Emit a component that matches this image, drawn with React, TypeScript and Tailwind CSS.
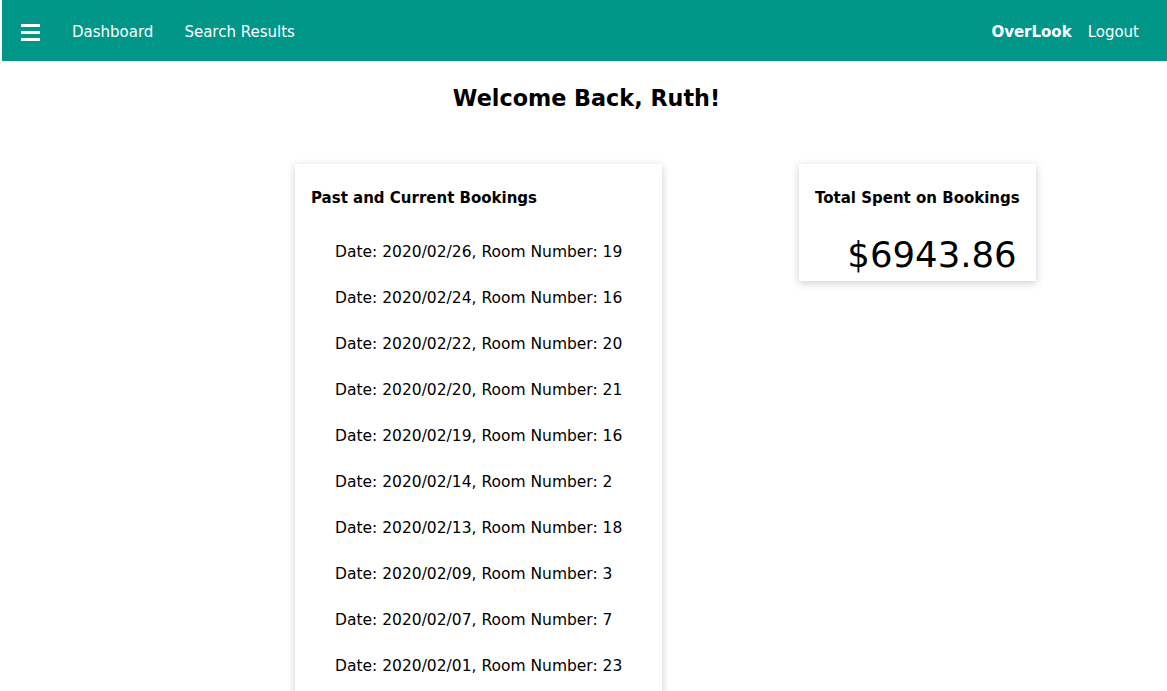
import React from "react";

const bookings = [
  ["2020/02/26", 19],
  ["2020/02/24", 16],
  ["2020/02/22", 20],
  ["2020/02/20", 21],
  ["2020/02/19", 16],
  ["2020/02/14", 2],
  ["2020/02/13", 18],
  ["2020/02/09", 3],
  ["2020/02/07", 7],
  ["2020/02/01", 23],
];

export default function App() {
  return (
    <div className="min-h-screen bg-white text-black" style={{ fontFamily: '"DejaVu Sans", Verdana, sans-serif' }}>
      <header className="ml-[2px] flex h-[61px] items-center justify-between bg-[#009688] pl-[19px] pr-[28px] pt-[4px] text-white">
        <div className="flex items-center">
          <div className="flex w-[19px] flex-col gap-[4px]">
            <span className="block h-[3px] bg-white" />
            <span className="block h-[3px] bg-white" />
            <span className="block h-[3px] bg-white" />
          </div>
          <nav className="ml-[32px] flex items-center gap-[31px] text-[15px]">
            <span>Dashboard</span>
            <span>Search Results</span>
          </nav>
        </div>
        <div className="flex items-center gap-[16px] text-[15px]">
          <span className="font-bold">OverLook</span>
          <span>Logout</span>
        </div>
      </header>
      <h1 className="mt-[24px] pl-[6px] text-center text-[22.3px] font-bold leading-[26px]">Welcome Back, Ruth!</h1>
      <main className="mt-[53px] flex items-start gap-[137px] pl-[295px]">
        <section className="w-[367px] bg-white px-[16px] pb-[20px] pt-[25px] shadow-[0_2px_8px_rgba(0,0,0,0.2)]">
          <h2 className="text-[15px] font-bold leading-[18px]">Past and Current Bookings</h2>
          <ul className="mt-[23px] pl-[24px] text-[15.5px]">
            {bookings.map(([d, n]) => (
              <li key={d as string} className="flex h-[46px] items-center">
                Date: {d}, Room Number: {n}
              </li>
            ))}
          </ul>
        </section>
        <section className="bg-white px-[16px] pb-[4px] pt-[25px] shadow-[0_2px_8px_rgba(0,0,0,0.2)]">
          <h2 className="text-[15px] font-bold leading-[18px]">Total Spent on Bookings</h2>
          <p className="mt-[26px] pr-[3px] text-right text-[35.5px] leading-[44px]">$6943.86</p>
        </section>
      </main>
    </div>
  );
}
